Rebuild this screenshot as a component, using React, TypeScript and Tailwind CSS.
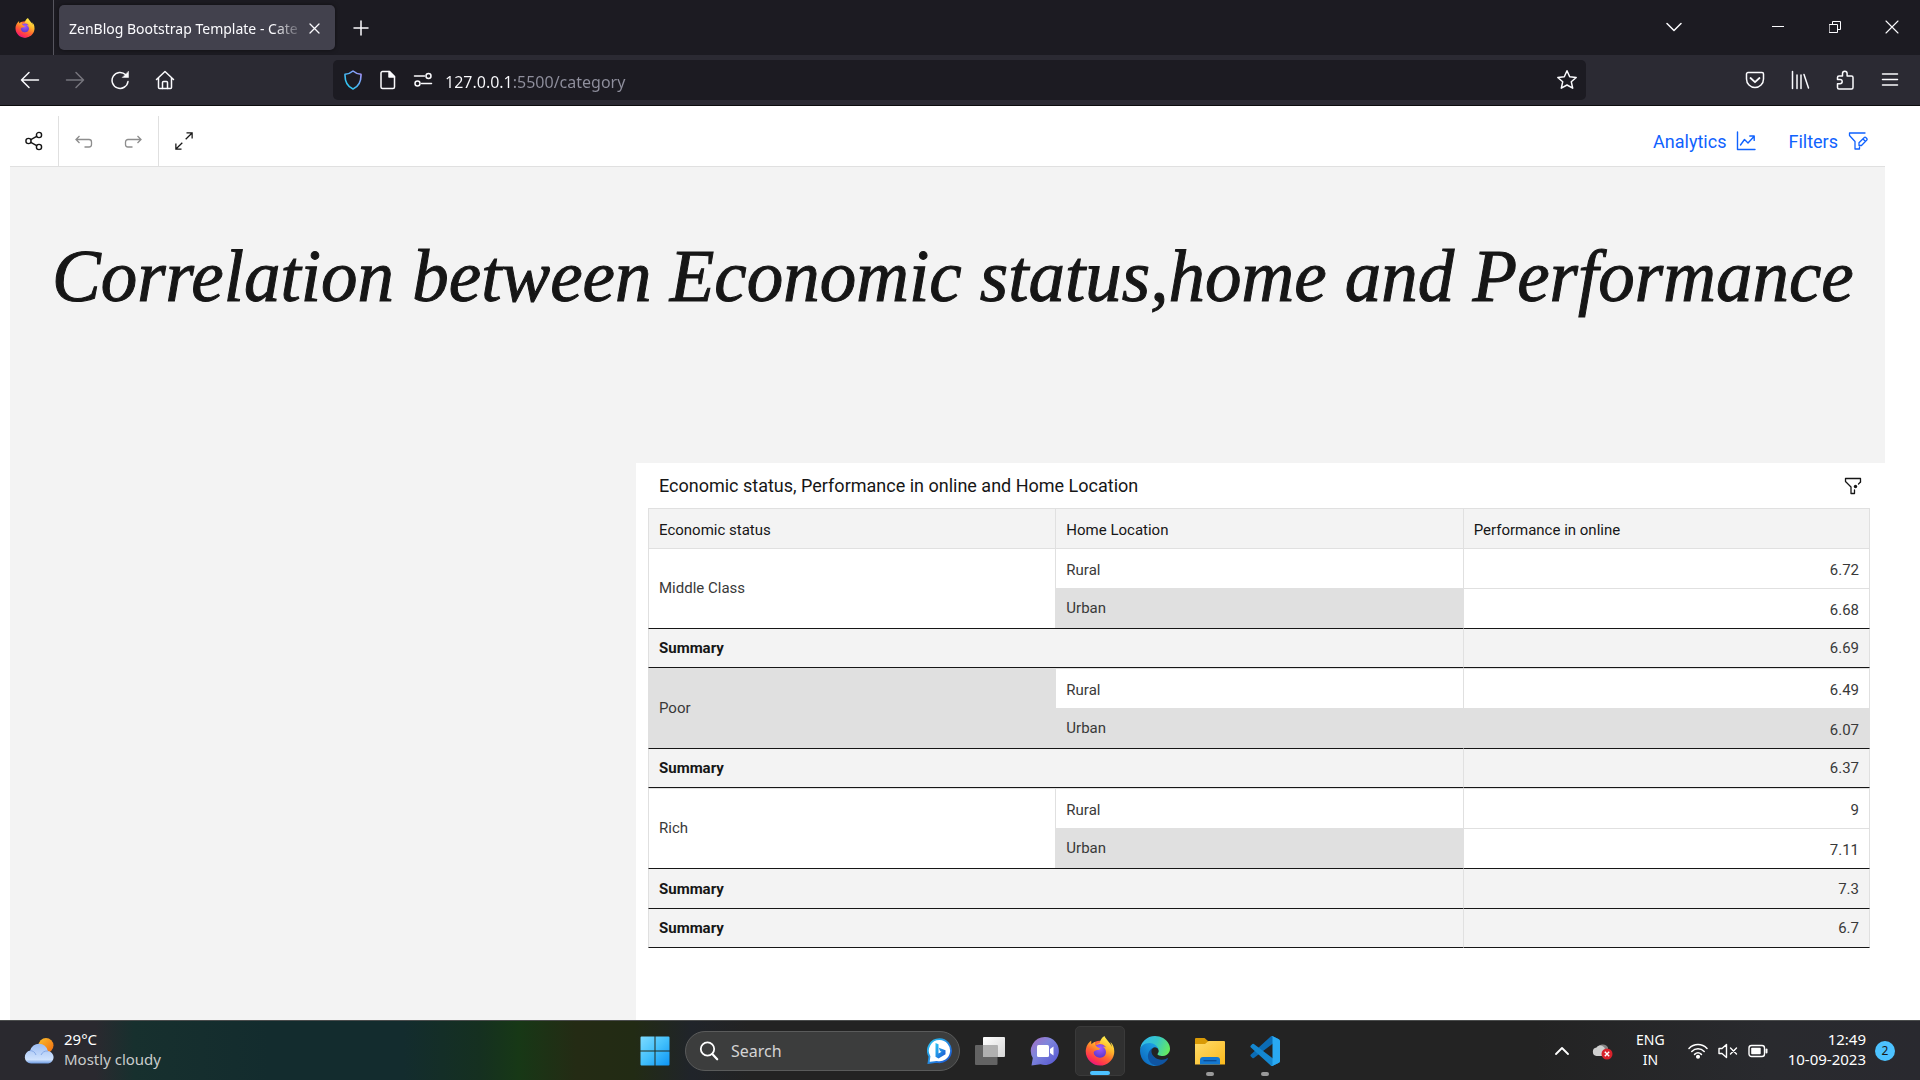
import React from 'react';
import { FaFirefoxBrowser } from 'react-icons/fa';

type IconProps = { className?: string; children: React.ReactNode; box?: number; stroke?: number };

function Icon({ className = 'size-5', children, box = 20, stroke = 1.5 }: IconProps) {
  return (
    <svg
      className={className}
      viewBox={`0 0 ${box} ${box}`}
      fill="none"
      stroke="currentColor"
      strokeWidth={stroke}
      strokeLinecap="round"
      strokeLinejoin="round"
      aria-hidden="true"
    >
      {children}
    </svg>
  );
}

function FirefoxLogo({ className }: { className: string }) {
  return (
    <span className={`relative block ${className}`}>
      <svg className="size-full" viewBox="0 0 32 32" aria-hidden="true">
        <defs>
          <linearGradient id="fox" x1="0.8" y1="0.05" x2="0.3" y2="1">
            <stop offset="0" stopColor="#fff44f" />
            <stop offset="0.35" stopColor="#ffb62b" />
            <stop offset="0.6" stopColor="#ff6a2f" />
            <stop offset="0.85" stopColor="#ff2f52" />
            <stop offset="1" stopColor="#e31587" />
          </linearGradient>
          <radialGradient id="globe" cx="0.5" cy="0.3" r="0.7">
            <stop offset="0" stopColor="#a45bff" />
            <stop offset="1" stopColor="#5a35c8" />
          </radialGradient>
        </defs>
        <circle cx="16" cy="18" r="13" fill="#ff6a3a" />
        <circle cx="16" cy="16" r="7.500" fill="url(#globe)" />
      </svg>
      <FaFirefoxBrowser className="absolute inset-0 size-full" fill="url(#fox)" />
    </span>
  );
}

function TabStrip() {
  return (
    <header className="flex h-[55px] shrink-0 items-center bg-[#1c1b22] text-[#fbfbfe]">
      <button aria-label="Firefox View" className="flex h-full w-[54px] shrink-0 items-center border-r border-[#56555e] pl-[15px]">
        <FirefoxLogo className="size-5" />
      </button>
      <div className="ml-[5px] flex h-[45px] w-[276px] items-center rounded-[5px] bg-[#42414d] pl-2.5 pr-[11px] pt-px shadow-[0_0_4px_rgba(0,0,0,0.5)]">
        <span className="flex-1 whitespace-nowrap text-[14px] [mask-image:linear-gradient(to_right,black_87%,transparent)]">
          ZenBlog Bootstrap Template - Cate
        </span>
        <button aria-label="Close tab" className="flex size-5 items-center justify-center">
          <Icon className="size-[11px]" box={11} stroke={1.3}>
            <path d="M1 1l9 9M10 1l-9 9" />
          </Icon>
        </button>
      </div>
      <button aria-label="New tab" className="ml-3 flex size-7 items-center justify-center">
        <Icon className="size-4" box={16} stroke={1.5}>
          <path d="M8 1v14M1 8h14" />
        </Icon>
      </button>
      <div className="ml-auto flex h-full items-center pb-px">
        <button aria-label="List all tabs" className="mr-[55px] flex w-10 justify-center">
          <Icon className="size-4" box={16}>
            <path d="M1 4.500l7 7 7-7" />
          </Icon>
        </button>
        <button aria-label="Minimize" className="flex w-[57px] justify-center">
          <Icon className="size-3" box={12} stroke={1}>
            <path d="M0 5.500h12" />
          </Icon>
        </button>
        <button aria-label="Restore" className="flex w-[57px] justify-center">
          <Icon className="size-3" box={12} stroke={1}>
            <path d="M.5 3.500h8v8h-8zM3.500 3.500v-3h8v8h-3" />
          </Icon>
        </button>
        <button aria-label="Close" className="flex w-[57px] justify-center">
          <Icon className="size-[14px]" box={14} stroke={1.1}>
            <path d="M1 1l12 12M13 1L1 13" />
          </Icon>
        </button>
      </div>
    </header>
  );
}

const navButton = 'flex h-10 w-[45px] items-center justify-center';

function NavBar() {
  return (
    <nav className="flex h-[51px] shrink-0 items-center border-b border-[#0c0c0d] bg-[#2b2a33] pl-[7px] pr-2 text-[#fbfbfe]">
      <button aria-label="Back" className={navButton}>
        <Icon><path d="M18.500 10h-17M9 2.500L1.500 10 9 17.500" /></Icon>
      </button>
      <button aria-label="Forward" className={`${navButton} text-[#76757d]`}>
        <Icon><path d="M1.500 10h17M11 2.500l7.500 7.500-7.500 7.500" /></Icon>
      </button>
      <button aria-label="Reload" className={navButton}>
        <Icon>
          <path d="M18 11.500a8 8 0 1 1-2.300-6.800" />
          <path d="M18.500 1.500v6h-6z" fill="currentColor" strokeWidth="0.500" />
        </Icon>
      </button>
      <button aria-label="Home" className={navButton}>
        <Icon>
          <path d="M1.500 9.500L10 1.500l8.500 8M3.500 8v9.500a1 1 0 0 0 1 1h11a1 1 0 0 0 1-1V8" />
          <path d="M7.500 18.500v-6a1 1 0 0 1 1-1h3a1 1 0 0 1 1 1v6" />
        </Icon>
      </button>
      <div className="mx-[146px] flex h-10 flex-1 items-center rounded-[5px] bg-[#1c1b22] pl-2.5 pr-2">
        <button aria-label="Tracking protection" className="shrink-0">
          <svg className="size-5" viewBox="0 0 20 20" fill="none" aria-hidden="true">
            <defs>
              <linearGradient id="shield" x1="1" y1="0" x2="0" y2="1">
                <stop offset="0" stopColor="#b691ff" />
                <stop offset="0.500" stopColor="#4fb4f5" />
                <stop offset="1" stopColor="#1fd0f0" />
              </linearGradient>
            </defs>
            <path d="M10 1c2.500 2.200 5 3 8 3.300.2 6-1.700 12-8 14.700C3.700 16.300 1.800 10.300 2 4.300 5 4 7.500 3.200 10 1z" stroke="url(#shield)" strokeWidth="1.600" strokeLinejoin="round" />
          </svg>
        </button>
        <button aria-label="Site information" className="ml-[15px] shrink-0">
          <Icon>
            <path d="M4.500 1.500h7l5 5V17a1.500 1.500 0 0 1-1.500 1.500H4.500A1.500 1.500 0 0 1 3 17V3a1.500 1.500 0 0 1 1.500-1.500z" />
            <path d="M11 1.500v5.500h5.500z" fill="currentColor" />
          </Icon>
        </button>
        <button aria-label="Permissions" className="ml-[15px] shrink-0">
          <Icon>
            <path d="M1.500 6h10M8.500 13.500h10" />
            <circle cx="15.500" cy="6" r="2.500" />
            <circle cx="4.500" cy="13.500" r="2.500" />
          </Icon>
        </button>
        <input
          aria-label="Address"
          defaultValue="127.0.0.1:5500/category"
          className="ml-3 min-w-0 flex-1 bg-[linear-gradient(to_right,#fbfbfe_67px,#8f8f9d_67px)] bg-clip-text pt-[3px] text-[16px] text-transparent outline-none"
        />
        <button aria-label="Bookmark this page">
          <Icon className="size-[22px]" box={22}>
            <path d="M11 1.800l2.700 6 6.500.7-4.900 4.300 1.400 6.400L11 16l-5.700 3.200 1.400-6.400L1.800 8.500l6.500-.7z" />
          </Icon>
        </button>
      </div>
      <button aria-label="Save to Pocket" className={navButton}>
        <Icon>
          <path d="M3 2.500h14a1.500 1.500 0 0 1 1.500 1.500v5a8.500 8.500 0 0 1-17 0V4A1.500 1.500 0 0 1 3 2.500z" />
          <path d="M5.500 8l4.500 4.200L14.500 8" strokeWidth="1.800" />
        </Icon>
      </button>
      <button aria-label="Library" className={navButton}>
        <Icon><path d="M2.500 1.500v17M7 5v13.500M11 5v13.500M14 4.500l4.500 13.500" /></Icon>
      </button>
      <button aria-label="Extensions" className={navButton}>
        <Icon>
          <path d="M7.500 6V3.500a2.300 2.300 0 0 1 4.600 0V6h4.400a1.500 1.500 0 0 1 1.500 1.500v10a1.500 1.500 0 0 1-1.500 1.500H4a1.500 1.500 0 0 1-1.500-1.500v-3.700H5a2.200 2.200 0 0 0 0-4.400H2.500V7.500A1.500 1.500 0 0 1 4 6z" />
        </Icon>
      </button>
      <button aria-label="Open application menu" className={navButton}>
        <Icon><path d="M2.500 4h15M2.500 9.500h15M2.500 15h15" /></Icon>
      </button>
    </nav>
  );
}

const toolButton = 'flex h-full w-[49px] items-center justify-center';

function Toolbar() {
  return (
    <div className="flex h-[51px] items-center border-b border-[#e0e0e0] font-[Roboto,sans-serif] text-[#161616]">
      <button aria-label="Share" className={`${toolButton} border-r border-[#e0e0e0]`}>
        <Icon box={20} stroke={1.4}>
          <circle cx="15" cy="4" r="2.600" />
          <circle cx="15" cy="16" r="2.600" />
          <circle cx="4.500" cy="10" r="2.600" />
          <path d="M6.800 8.700l5.900-3.400M6.800 11.300l5.900 3.400" />
        </Icon>
      </button>
      <button aria-label="Undo" className={`${toolButton} text-[#8d8d8d]`}>
        <Icon stroke={1.3}>
          <path d="M5.500 5L2 8.500 5.500 12M2 8.500h13a2.500 2.500 0 0 1 2.500 2.500v2.500A2.500 2.500 0 0 1 15 16h-4.500" strokeLinecap="butt" strokeLinejoin="miter" />
        </Icon>
      </button>
      <button aria-label="Redo" className={`${toolButton} w-[51px] border-r border-[#e0e0e0] text-[#8d8d8d]`}>
        <Icon stroke={1.3}>
          <path d="M14.500 5L18 8.500 14.500 12M18 8.500H5A2.500 2.500 0 0 0 2.500 11v2.500A2.500 2.500 0 0 0 5 16h4.500" strokeLinecap="butt" strokeLinejoin="miter" />
        </Icon>
      </button>
      <button aria-label="Full screen" className={toolButton}>
        <svg className="size-5" viewBox="0 0 32 32" fill="currentColor" aria-hidden="true">
          <path d="M20 2v2h6.586L18 12.582 19.414 14 28 5.414V12h2V2zM14 19.416L12.592 18 4 26.586V20H2v10h10v-2H5.414z" />
        </svg>
      </button>
      <div className="ml-auto flex items-center gap-8 pr-[17px] text-[18px] text-[#0f62fe]">
        <button className="flex items-center gap-2.5">
          Analytics
          <Icon stroke={1.4}>
            <path d="M1.500 1v17.500H19M4.500 14l4-5.500 3.500 3.500 6-6.500M13.800 5h4.400v4.400" />
          </Icon>
        </button>
        <button className="flex items-center gap-2.5">
          Filters
          <Icon stroke={1.3}>
            <path d="M17 2H1.500v2.500L7 10.500V18h4.500v-2" />
            <path d="M11 14.500v-2.700l5.300-5.300a1 1 0 0 1 1.500 0l1 1a1 1 0 0 1 0 1.500l-5.300 5.500zM15 8l2.300 2.300" />
          </Icon>
        </button>
      </div>
    </div>
  );
}

type Group = { status: string; rural: string; urban: string; total: string; shaded?: boolean };

const groups: Group[] = [
  { status: 'Middle Class', rural: '6.72', urban: '6.68', total: '6.69' },
  { status: 'Poor', rural: '6.49', urban: '6.07', total: '6.37', shaded: true },
  { status: 'Rich', rural: '9', urban: '7.11', total: '7.3' },
];

const cell = 'h-10 border-l border-t border-[#e0e0e0] px-2.5 pt-0.5 text-left font-normal';
const lowCell = 'h-10 border-l border-t border-[#e0e0e0] px-2.5 pb-0.5 text-left font-normal';
const number = 'h-10 border-x border-t border-[#e0e0e0] px-2.5 pt-0.5 text-right tabular-nums';
const summaryLabel = 'h-10 border-l border-t border-l-[#e0e0e0] border-t-[#161616] px-2.5 text-left font-bold text-[#161616]';
const summaryNumber = 'h-10 border-x border-t border-x-[#e0e0e0] border-t-[#161616] px-2.5 text-right tabular-nums';

function DataTable() {
  return (
    <table className="w-full table-fixed border-separate border-spacing-0 text-[15px] leading-5 text-[#393939]">
      <thead>
        <tr className="bg-[#f3f3f3] text-[#161616]">
          <th scope="col" className={cell}>Economic status</th>
          <th scope="col" className={cell}>Home Location</th>
          <th scope="col" className={`${cell} border-r`}>Performance in online</th>
        </tr>
      </thead>
      {groups.map((g, i) => {
        const last = i === groups.length - 1;
        return (
          <tbody key={g.status}>
            <tr>
              <th scope="rowgroup" rowSpan={2} className={g.shaded ? `${lowCell} bg-[#e0e0e0]` : lowCell}>{g.status}</th>
              <th scope="row" className={cell}>Rural</th>
              <td className={number}>{g.rural}</td>
            </tr>
            <tr>
              <th scope="row" className={`${lowCell} bg-[#e0e0e0]`}>Urban</th>
              <td className={g.shaded ? `${number} bg-[#e0e0e0]` : number}>{g.urban}</td>
            </tr>
            <tr className="bg-[#f3f3f3]">
              <th scope="row" colSpan={2} className={last ? summaryLabel : `${summaryLabel} border-b border-b-[#161616]`}>Summary</th>
              <td className={last ? summaryNumber : `${summaryNumber} border-b border-b-[#161616]`}>{g.total}</td>
            </tr>
          </tbody>
        );
      })}
      <tfoot>
        <tr className="bg-[#f3f3f3]">
          <th scope="row" colSpan={2} className={`${summaryLabel} border-b border-b-[#161616]`}>Summary</th>
          <td className={`${summaryNumber} border-b border-b-[#161616]`}>6.7</td>
        </tr>
      </tfoot>
    </table>
  );
}

function Dashboard() {
  return (
    <main className="flex min-h-0 flex-1 flex-col overflow-hidden bg-white pl-2.5 pr-[35px] pt-2.5">
      <Toolbar />
      <section className="flex min-h-0 flex-1 flex-col bg-[#f3f3f3] text-[#161616]">
        <h1 className="h-[296px] shrink-0 whitespace-nowrap pl-[42px] pt-[70px] font-['Liberation_Serif',serif] text-[73px] italic leading-[80px] [-webkit-text-stroke:1px_#161616]">
          Correlation between Economic status,home and Performance
        </h1>
        <div className="grid min-h-0 flex-1 grid-cols-3">
          <article className="col-span-2 col-start-2 ml-px bg-white pl-3 pr-[15px] font-[Roboto,sans-serif]">
            <div className="flex h-[45px] items-center justify-between pl-[11px] pr-2">
              <h2 className="text-[18px]">Economic status, Performance in online and Home Location</h2>
              <button aria-label="Widget filters">
                <Icon className="size-[18px]" box={18} stroke={1.3}>
                  <path d="M16.500 5V1.500h-15V4.500L7 10v6.500h3.500V13" />
                  <circle cx="11.500" cy="9.500" r="1.700" fill="currentColor" stroke="none" />
                  <path d="M14.500 7l2-2" />
                </Icon>
              </button>
            </div>
            <DataTable />
          </article>
        </div>
      </section>
    </main>
  );
}

function WeatherIcon() {
  return (
    <svg className="h-[26px] w-[31px]" viewBox="0 0 31 26" aria-hidden="true">
      <defs>
        <linearGradient id="sun" x1="0" y1="0" x2="1" y2="1">
          <stop offset="0" stopColor="#fbc02d" />
          <stop offset="1" stopColor="#f0690f" />
        </linearGradient>
        <linearGradient id="cloud" x1="0" y1="0" x2="0" y2="1">
          <stop offset="0" stopColor="#9dbdf3" />
          <stop offset="0.800" stopColor="#cfe2fd" />
          <stop offset="1" stopColor="#6d9ae2" />
        </linearGradient>
      </defs>
      <circle cx="22" cy="7.500" r="7.500" fill="url(#sun)" />
      <path d="M7 25.500a6.500 6.500 0 0 1-.8-12.900 9 9 0 0 1 17.600.4 6.300 6.300 0 0 1 .5 12.500z" fill="url(#cloud)" />
      <path d="M12 17a6.500 6.500 0 0 0-6-4.400M17 17a7 7 0 0 1 7-4" stroke="#86a9e6" fill="none" />
    </svg>
  );
}

function BingIcon() {
  return (
    <svg className="h-[26px] w-[25px]" viewBox="0 0 25 26" aria-hidden="true">
      <defs>
        <linearGradient id="bing" x1="0" y1="0" x2="1" y2="1">
          <stop offset="0" stopColor="#2cc7f5" />
          <stop offset="1" stopColor="#1a4fd0" />
        </linearGradient>
      </defs>
      <path d="M12.500 1.200a11.500 11.500 0 1 1-3 22.600L1.500 25l1-6.500a11.500 11.500 0 0 1 10-17.300z" fill="#fff" stroke="url(#bing)" strokeWidth="1.800" />
      <path d="M8.500 5l3 1.200v9.300l3-1.700-1.500-.8-1.200-3.200 6.700 2.500v4l-7 4.200-3-1.800z" fill="url(#bing)" />
    </svg>
  );
}

function TaskViewIcon() {
  return (
    <svg className="size-[30px]" viewBox="0 0 30 30" aria-hidden="true">
      <defs>
        <linearGradient id="pane" x1="0" y1="0" x2="1" y2="1">
          <stop offset="0" stopColor="#fff" />
          <stop offset="1" stopColor="#d6d6d6" />
        </linearGradient>
      </defs>
      <rect x="8" y="1" width="22" height="20" rx="1" fill="url(#pane)" />
      <rect x="0" y="9" width="22.500" height="20" rx="1" fill="#6f6f6f" fillOpacity="0.850" />
      <rect x="8" y="9" width="14.500" height="12" fill="#b0b0b0" />
    </svg>
  );
}

function ChatIcon() {
  return (
    <svg className="size-[30px]" viewBox="0 0 30 30" aria-hidden="true">
      <defs>
        <linearGradient id="chat" x1="0" y1="0" x2="1" y2="1">
          <stop offset="0" stopColor="#a86bc0" />
          <stop offset="0.400" stopColor="#7f86dc" />
          <stop offset="1" stopColor="#5252d0" />
        </linearGradient>
      </defs>
      <path d="M15 1a14 14 0 1 1-4.500 27.300L1.500 29.500l1.300-7.400A14 14 0 0 1 15 1z" fill="url(#chat)" />
      <rect x="7" y="9" width="12" height="12" rx="1.500" fill="#fff" />
      <path d="M20 13l3.500-2.500v9L20 17z" fill="#fff" />
    </svg>
  );
}

function EdgeIcon() {
  return (
    <svg className="size-[30px]" viewBox="0 0 256 256" aria-hidden="true">
      <defs>
        <linearGradient id="edgeBlue" x1="0.900" y1="0.300" x2="0.300" y2="1">
          <stop offset="0" stopColor="#1b9de2" />
          <stop offset="1" stopColor="#0d6ac0" />
        </linearGradient>
        <linearGradient id="edgeTop" x1="0" y1="0.300" x2="1" y2="0.600">
          <stop offset="0" stopColor="#2fb8ee" />
          <stop offset="0.500" stopColor="#36c6c8" />
          <stop offset="1" stopColor="#66eb5e" />
        </linearGradient>
      </defs>
      <path fill="#0f55a2" d="M231 190.500c-3.400 1.800-6.900 3.400-10.500 4.700a101.500 101.500 0 0 1-35.500 6.400c-46.800 0-87.500-32.200-87.500-73.500A31 31 0 0 1 114.200 101c-42.300 1.800-53.200 45.900-53.200 71.700 0 73.100 67.300 80.500 81.800 80.500 7.800 0 19.600-2.300 26.700-4.500l1.300-.4a128.300 128.300 0 0 0 66.500-52.800 4 4 0 0 0-6.300-5z" />
      <path fill="url(#edgeBlue)" d="M105.700 241.600a79.200 79.200 0 0 1-22.700-21.300 80.700 80.700 0 0 1 29.500-120c3.100-1.500 8.500-4.100 15.600-4a32.400 32.400 0 0 1 25.700 13 31.900 31.900 0 0 1 6.300 18.700c0-.2 24.500-79.600-80-79.600-43.900 0-80 41.600-80 78.200a130 130 0 0 0 12.100 56 128 128 0 0 0 156.400 67 75.500 75.500 0 0 1-62.800-8z" />
      <path fill="url(#edgeTop)" d="M152.300 148.900c-.9 1-3.400 2.500-3.400 5.600 0 2.600 1.700 5.200 4.800 7.300 14.400 10.100 41.600 8.700 41.700 8.700 10.700 0 21.100-2.900 30.300-8.300A61.400 61.400 0 0 0 256 109.400c.2-22.400-8-37.300-11.300-43.900C223.500 24.300 178 0 128 0A128 128 0 0 0 0 126.200c.5-36.500 36.800-66 80-66 3.500 0 23.500.3 42 10a72.600 72.600 0 0 1 30.900 29.300c6.100 10.600 7.200 24.100 7.200 29.500s-2.700 13.300-7.800 19.900z" />
    </svg>
  );
}

function FolderIcon() {
  return (
    <svg className="size-[30px]" viewBox="0 0 30 30" aria-hidden="true">
      <defs>
        <linearGradient id="folder" x1="0" y1="0" x2="1" y2="1">
          <stop offset="0" stopColor="#ffdc6b" />
          <stop offset="1" stopColor="#fbb91c" />
        </linearGradient>
      </defs>
      <path d="M0 3a1 1 0 0 1 1-1h8.500L13 5v4H0z" fill="#d99a06" />
      <path d="M0 8h10l3.500-3H29a1 1 0 0 1 1 1v22.500H0z" fill="url(#folder)" />
      <path d="M5 28.500V24a3 3 0 0 1 3-3h14a3 3 0 0 1 3 3v4.500z" fill="#1478d0" />
      <path d="M8.500 24.700h13" stroke="#0b4a92" strokeWidth="1.300" />
    </svg>
  );
}

function CodeIcon() {
  return (
    <svg className="size-[30px]" viewBox="0 0 100 100" aria-hidden="true">
      <path d="M96 11L76 1a6 6 0 0 0-7 1L3 62a4 4 0 0 0 0 6l5 5a4 4 0 0 0 5 0l79-60c3-2 7 0 7 3.500z" fill="#0b6cb5" />
      <path d="M96 89L76 99a6 6 0 0 1-7-1L3 38a4 4 0 0 1 0-6l5-5a4 4 0 0 1 5 0l79 60c3 2 7 0 7-3.500z" fill="#1487d0" />
      <path d="M76 99a6 6 0 0 1-7-1c2.300 2.300 6 .6 6-2.500v-91C75 1.400 71.300-.3 69 2a6 6 0 0 1 7-1l20.600 10A6 6 0 0 1 100 16.500v67a6 6 0 0 1-3.400 5.500z" fill="#29a9f2" />
    </svg>
  );
}

type AppTile = { name: string; icon: React.ReactNode; state?: 'active' | 'running' };

const apps: AppTile[] = [
  { name: 'Task view', icon: <TaskViewIcon /> },
  { name: 'Chat', icon: <ChatIcon /> },
  { name: 'Firefox', icon: <FirefoxLogo className="size-[30px]" />, state: 'active' },
  { name: 'Microsoft Edge', icon: <EdgeIcon /> },
  { name: 'File Explorer', icon: <FolderIcon />, state: 'running' },
  { name: 'Visual Studio Code', icon: <CodeIcon />, state: 'running' },
];

function Taskbar() {
  return (
    <footer className="grid h-[60px] shrink-0 grid-cols-[1fr_auto_1fr] items-center border-t border-[#4b4d4d] bg-[linear-gradient(to_right,#2a292f_0%,#2a292f_5%,#17302e_7%,#132c2e_14%,#132c2e_21%,#153020_25%,#173816_27%,#242b14_30%,#222b14_33%,#20242a_36%,#232323_39%,#232323_80%,#292a2e_92%,#29292f_100%)] text-[15px] leading-5 text-white">
      <button className="flex items-center gap-[9px] justify-self-start pl-6 text-left">
        <WeatherIcon />
        <span className="flex flex-col pb-1">
          <span>29°C</span>
          <span className="text-[#c9cccc]">Mostly cloudy</span>
        </span>
      </button>
      <div className="flex items-center gap-[5px]">
        <button aria-label="Start" className="flex size-[50px] items-center justify-center">
          <svg className="size-[30px]" viewBox="0 0 30 30" aria-hidden="true">
            <defs>
              <linearGradient id="win" x1="0" y1="0" x2="30" y2="30" gradientUnits="userSpaceOnUse">
                <stop offset="0" stopColor="#7fdcff" />
                <stop offset="0.500" stopColor="#43c0fb" />
                <stop offset="1" stopColor="#0b93f4" />
              </linearGradient>
            </defs>
            <path d="M1.500.5H14.500v14h-14v-13a1 1 0 0 1 1-1zM15.500.5h13a1 1 0 0 1 1 1v13h-14zM.5 15.500h14v14h-13a1 1 0 0 1-1-1zM15.500 15.500h14v13a1 1 0 0 1-1 1h-13z" fill="url(#win)" />
          </svg>
        </button>
        <label className="flex h-10 w-[275px] items-center rounded-full border border-[#5a5b5b] bg-[#3c3d3d] pl-[13px] pr-[7px]">
          <Icon className="size-5" stroke={1.8}>
            <circle cx="8.500" cy="8" r="6.700" />
            <path d="M13.300 13l4.900 5.300" strokeWidth="2.200" />
          </Icon>
          <input aria-label="Search" placeholder="Search" className="ml-3 min-w-0 flex-1 bg-transparent text-[16px] outline-none placeholder:text-[#d4d4d4]" />
          <BingIcon />
        </label>
        {apps.map((a) => (
          <button
            key={a.name}
            aria-label={a.name}
            className={
              a.state === 'active'
                ? 'relative flex size-[50px] items-center justify-center rounded-[5px] border border-[#3a3a3a] bg-[#303030]'
                : 'relative flex size-[50px] items-center justify-center'
            }
          >
            {a.icon}
            {a.state === 'active' && <span className="absolute bottom-0 h-1 w-5 rounded-full bg-[#4cc2ff]" />}
            {a.state === 'running' && <span className="absolute bottom-0 h-1 w-2 rounded-full bg-[#9a9a9a]" />}
          </button>
        ))}
      </div>
      <div className="flex items-center justify-self-end pr-[25px]">
        <button aria-label="Show hidden icons">
          <Icon className="size-[14px]" box={14} stroke={1.8}>
            <path d="M1 10l6-6 6 6" />
          </Icon>
        </button>
        <button aria-label="OneDrive" className="ml-[23px]">
          <svg className="h-[18px] w-[21px]" viewBox="0 0 21 18" aria-hidden="true">
            <path d="M5 7a6 6 0 0 1 11-1.500v6H5z" fill="#858585" />
            <path d="M4.500 14a4.300 4.300 0 0 1 0-8.500C7 2 12 3.500 13 7l-2 7z" fill="#cfcfcf" />
            <circle cx="15" cy="12" r="5.500" fill="#d8222b" />
            <path d="M12.800 9.800l4.400 4.400M17.200 9.800l-4.400 4.400" stroke="#fff" strokeWidth="1.400" />
          </svg>
        </button>
        <button className="ml-[23px] flex flex-col items-center pb-px text-[14px]">
          <span>ENG</span>
          <span>IN</span>
        </button>
        <button aria-label="Network, volume and battery" className="ml-[23px] flex items-center gap-2.5">
          <Icon stroke={1.5}>
            <path d="M1 7.500c5-5.300 13-5.300 18 0M3.800 10.500c3.500-3.600 8.900-3.600 12.400 0M6.600 13.400c2-1.900 4.800-1.900 6.800 0" />
            <circle cx="10" cy="15.800" r="1.300" fill="currentColor" />
          </Icon>
          <Icon stroke={1.4}>
            <path d="M1 7.500h3l4.500-4v13l-4.500-4H1zM12.500 7l6 6M18.500 7l-6 6" />
          </Icon>
          <Icon stroke={1.4}>
            <rect x="1" y="4.500" width="15.500" height="11" rx="2.500" />
            <rect x="3.200" y="6.700" width="9.500" height="6.600" rx="0.800" fill="currentColor" stroke="none" />
            <path d="M18.500 8.500v3" strokeWidth="2" />
          </Icon>
        </button>
        <button className="ml-5 flex flex-col items-end pb-1">
          <span>12:49</span>
          <span>10-09-2023</span>
        </button>
        <button aria-label="2 notifications" className="ml-[9px] flex size-5 items-center justify-center rounded-full bg-[#4cc2ff] text-[12px] text-[#1a1a1a]">
          2
        </button>
      </div>
    </footer>
  );
}

export default function App() {
  return (
    <div className="flex h-screen flex-col overflow-hidden font-['Noto_Sans',sans-serif]">
      <TabStrip />
      <NavBar />
      <Dashboard />
      <Taskbar />
    </div>
  );
}
